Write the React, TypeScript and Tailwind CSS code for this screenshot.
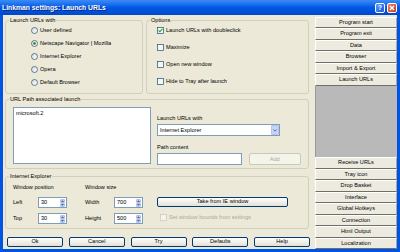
import React from "react";

const TXT = "text-[5.6px] leading-[7px]";

function Radio({ checked }: { checked?: boolean }) {
  return (
    <svg width="7" height="7" viewBox="0 0 7 7" className="shrink-0">
      <defs>
        <linearGradient id="rg" x1="0" y1="0" x2="1" y2="1">
          <stop offset="0" stopColor="#DAD9D1" />
          <stop offset="1" stopColor="#FFFFFF" />
        </linearGradient>
      </defs>
      <circle cx="3.5" cy="3.5" r="3" fill="url(#rg)" stroke="#1C5180" strokeWidth="0.7" />
      {checked && <circle cx="3.5" cy="3.5" r="1.3" fill="#2B7D2B" />}
    </svg>
  );
}

function Check({ checked, disabled }: { checked?: boolean; disabled?: boolean }) {
  return (
    <svg width="7" height="7" viewBox="0 0 7 7" className="shrink-0">
      <rect
        x="0.4"
        y="0.4"
        width="6.2"
        height="6.2"
        fill={disabled ? "#F4F3EC" : "#F6F6F1"}
        stroke={disabled ? "#CAC8BB" : "#1C5180"}
        strokeWidth="0.7"
      />
      {checked && <path d="M1.6 3.4 L2.9 4.8 L5.4 1.9" fill="none" stroke="#21A121" strokeWidth="1.1" />}
    </svg>
  );
}

function XPButton({ label, w, h = "h-[10px]", disabled }: { label: string; w: string; h?: string; disabled?: boolean }) {
  return (
    <div
      className={`${w} ${h} rounded-[2px] border flex items-center justify-center ${TXT} ${
        disabled
          ? "border-[#CAC8BB] bg-[#F5F4EA] text-[#ACA899]"
          : "border-[#003C74] bg-gradient-to-b from-white to-[#E3E0D3] text-black"
      }`}
    >
      {label}
    </div>
  );
}

function Spin({ value }: { value: string }) {
  return (
    <div className="w-[28.5px] h-[10.5px] border border-[#7F9DB9] bg-white flex">
      <span className={`flex-1 pl-[2px] ${TXT} leading-[8.5px]`}>{value}</span>
      <div className="w-[6.5px] flex flex-col gap-[0.5px] p-[0.5px]">
        <div className="flex-1 rounded-[1px] bg-[#C6D4F7] border-[0.5px] border-[#AFC1EC] flex items-center justify-center">
          <svg width="3" height="2" viewBox="0 0 3 2">
            <path d="M0 2 L1.5 0.3 L3 2 Z" fill="#4D6185" />
          </svg>
        </div>
        <div className="flex-1 rounded-[1px] bg-[#C6D4F7] border-[0.5px] border-[#AFC1EC] flex items-center justify-center">
          <svg width="3" height="2" viewBox="0 0 3 2">
            <path d="M0 0 L1.5 1.7 L3 0 Z" fill="#4D6185" />
          </svg>
        </div>
      </div>
    </div>
  );
}

function SideBtn({ label }: { label: string }) {
  return (
    <div
      className={`h-[11.5px] shrink-0 flex items-center justify-center bg-[#EDEBE0] border-t border-l border-t-white border-l-white border-b border-r border-b-[#716F64] border-r-[#ACA899] ${TXT}`}
    >
      {label}
    </div>
  );
}

function Group({ title, className, children }: { title: string; className: string; children?: React.ReactNode }) {
  return (
    <div className={`relative border border-[#D0D0BF] rounded-[3px] ${className}`}>
      <span className={`absolute left-[3px] -top-[4px] px-[1px] bg-[#ECE9D8] ${TXT}`}>{title}</span>
      {children}
    </div>
  );
}

export default function App() {
  return (
    <div className="w-[400px] h-[252px] bg-[#0054E3] flex flex-col font-['Liberation_Sans',Arial,sans-serif] text-black overflow-hidden">
      {/* Title bar */}
      <div className="h-[15px] shrink-0 flex items-center pl-[2px] pr-[3px] bg-gradient-to-b from-[#3A8CF6] via-[#0058E6] to-[#0049CC]">
        <span className="text-[6.8px] font-bold text-white leading-[8px] [text-shadow:1px_1px_0_#0A1E7A]">
          Linkman settings: Launch URLs
        </span>
        <div className="ml-auto flex gap-[2px] items-center">
          <div className="w-[10px] h-[10px] rounded-[2px] border-[0.5px] border-white bg-gradient-to-br from-[#5A9BFF] to-[#1A55D8] flex items-center justify-center text-white text-[7px] font-bold leading-[8px]">
            ?
          </div>
          <div className="w-[10px] h-[10px] rounded-[2px] border-[0.5px] border-white bg-gradient-to-br from-[#EE8466] to-[#C83412] flex items-center justify-center">
            <svg width="6" height="6" viewBox="0 0 6 6">
              <path d="M1 1 L5 5 M5 1 L1 5" stroke="white" strokeWidth="1.3" />
            </svg>
          </div>
        </div>
      </div>

      {/* Body */}
      <div className="flex-1 mx-[3px] mb-[3px] bg-[#ECE9D8] flex">
        {/* Left side */}
        <div className="w-[312px] shrink-0 pl-[2px] pt-[5px] flex flex-col">
          <div className="flex gap-[3px]">
            <Group title="Launch URLs with" className="w-[138px] h-[74px]">
              <div className="pt-[3px] pl-[25px] flex flex-col">
                {[
                  ["User defined", false],
                  ["Netscape Navigator | Mozilla", true],
                  ["Internet Explorer", false],
                  ["Opera", false],
                  ["Default Browser", false],
                ].map(([l, c]) => (
                  <div key={l as string} className="h-[13px] flex items-center gap-[2px]">
                    <Radio checked={c as boolean} />
                    <span className={TXT}>{l as string}</span>
                  </div>
                ))}
              </div>
            </Group>
            <Group title="Options" className="w-[163px] h-[74px]">
              <div className="pt-[4.5px] pl-[10px] flex flex-col gap-[8px]">
                {[
                  ["Launch URLs with doubleclick", true],
                  ["Maximize", false],
                  ["Open new window", false],
                  ["Hide to Tray after launch", false],
                ].map(([l, c]) => (
                  <div key={l as string} className="h-[9px] flex items-center gap-[2px]">
                    <Check checked={c as boolean} />
                    <span className={TXT}>{l as string}</span>
                  </div>
                ))}
              </div>
            </Group>
          </div>

          <Group title="URL Path associated launch" className="w-[304px] h-[70px] mt-[5px]">
            <div className="pt-[7px] pl-[7px] flex gap-[6px]">
              <div className={`w-[138px] h-[57px] border border-[#7F9DB9] bg-white px-[2px] pt-[1.5px] ${TXT}`}>
                microsoft.2
              </div>
              <div className="flex flex-col">
                <span className={`mt-[8px] ${TXT}`}>Launch URLs with</span>
                <div className="mt-[2px] w-[123px] h-[12px] border border-[#7F9DB9] bg-white flex items-center">
                  <span className={`flex-1 pl-[2px] ${TXT}`}>Internet Explorer</span>
                  <div className="w-[8px] h-[10px] mr-[0.5px] rounded-[1px] bg-[#C6D4F7] border-[0.5px] border-[#B1C3EE] flex items-center justify-center">
                    <svg width="4" height="3" viewBox="0 0 4 3">
                      <path d="M0.4 0.5 L2 2.2 L3.6 0.5" fill="none" stroke="#4D6185" strokeWidth="0.9" />
                    </svg>
                  </div>
                </div>
                <span className={`mt-[8px] ${TXT}`}>Path content</span>
                <div className="mt-[2px] flex gap-[6.5px]">
                  <div className="w-[85px] h-[12px] border border-[#7F9DB9] bg-white" />
                  <XPButton label="Add" w="w-[52.5px]" h="h-[12px]" disabled />
                </div>
              </div>
            </div>
          </Group>

          <Group title="Internet Explorer" className="w-[304px] h-[53px] mt-[7px]">
            <div className="pt-[7px] pl-[7px] flex">
              <div className="w-[72px] flex flex-col">
                <span className={TXT}>Window position</span>
                <div className="mt-[6px] flex items-center">
                  <span className={`w-[25px] ${TXT}`}>Left</span>
                  <Spin value="30" />
                </div>
                <div className="mt-[5.5px] flex items-center">
                  <span className={`w-[25px] ${TXT}`}>Top</span>
                  <Spin value="30" />
                </div>
              </div>
              <div className="w-[72px] flex flex-col">
                <span className={TXT}>Window size</span>
                <div className="mt-[6px] flex items-center">
                  <span className={`w-[29px] ${TXT}`}>Width</span>
                  <Spin value="700" />
                </div>
                <div className="mt-[5.5px] flex items-center">
                  <span className={`w-[29px] ${TXT}`}>Height</span>
                  <Spin value="500" />
                </div>
              </div>
              <div className="flex flex-col">
                <div className="h-[7px]" />
                <div className="mt-[5.5px]">
                  <XPButton label="Take from IE window" w="w-[131px]" h="h-[10.5px]" />
                </div>
                <div className="mt-[5.5px] h-[10.5px] pl-[3px] flex items-center gap-[2px]">
                  <Check disabled />
                  <span className={`${TXT} text-[#ACA899]`}>Set window bounds from settings</span>
                </div>
              </div>
            </div>
          </Group>

          <div className="mt-[7.5px] ml-[2px] flex gap-[5.75px]">
            {["Ok", "Cancel", "Try", "Defaults", "Help"].map((l) => (
              <XPButton key={l} label={l} w="w-[56px]" />
            ))}
          </div>
        </div>

        {/* Right side tabs */}
        <div className="flex-1 pt-[1.5px] flex flex-col">
          {["Program start", "Program exit", "Data", "Browser", "Import & Export", "Launch URLs"].map((l) => (
            <SideBtn key={l} label={l} />
          ))}
          <div className="flex-1 bg-[#B9B9B9] border-l border-l-[#9A9A9A]" />
          {[
            "Receive URLs",
            "Tray icon",
            "Drop Basket",
            "Interface",
            "Global Hotkeys",
            "Connection",
            "Html Output",
            "Localization",
          ].map((l) => (
            <SideBtn key={l} label={l} />
          ))}
        </div>
      </div>
    </div>
  );
}
